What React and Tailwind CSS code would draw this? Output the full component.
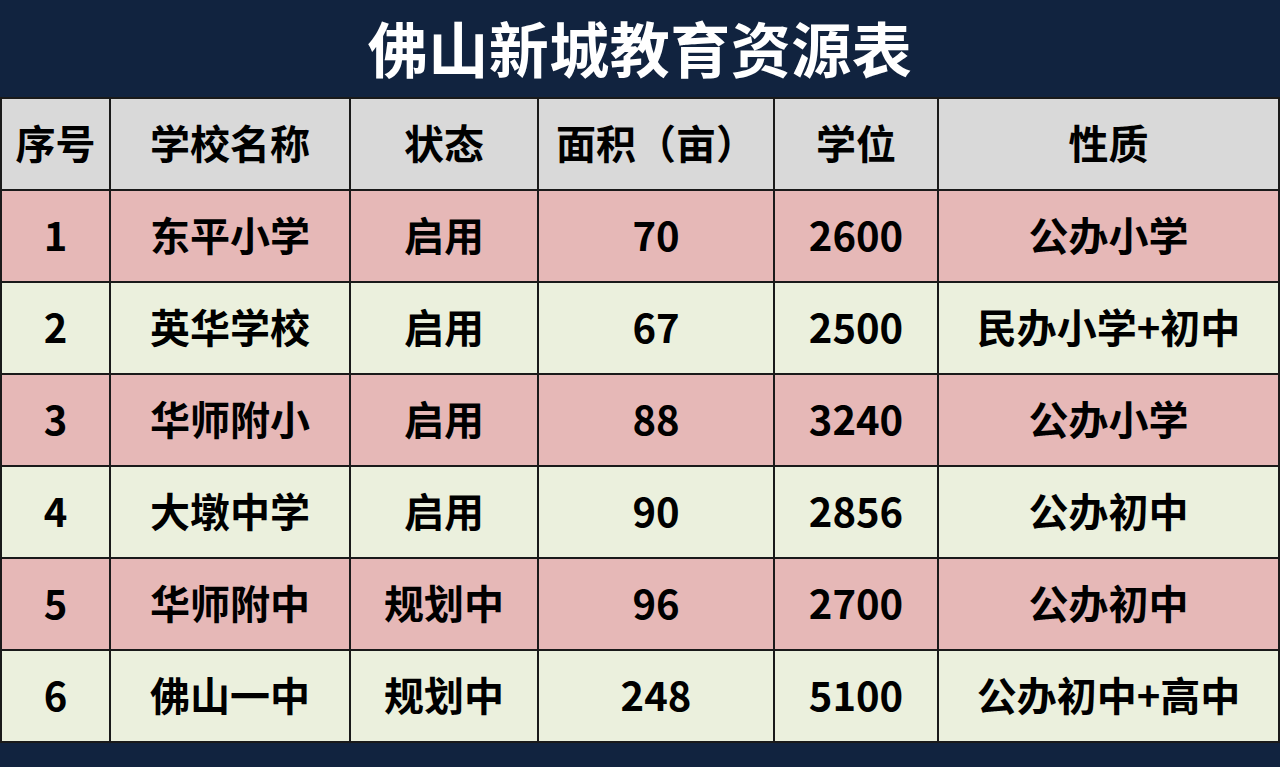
import React from 'react';

const COLS = 'grid grid-cols-[107px_240px_188px_236px_164px_1fr]';

const headers = ['序号', '学校名称', '状态', '面积（亩）', '学位', '性质'];

const rows = [
  ['1', '东平小学', '启用', '70', '2600', '公办小学'],
  ['2', '英华学校', '启用', '67', '2500', '民办小学+初中'],
  ['3', '华师附小', '启用', '88', '3240', '公办小学'],
  ['4', '大墩中学', '启用', '90', '2856', '公办初中'],
  ['5', '华师附中', '规划中', '96', '2700', '公办初中'],
  ['6', '佛山一中', '规划中', '248', '5100', '公办初中+高中'],
];

const Cell = ({ children, first }) => (
  <div
    className={`flex items-center justify-center h-[90px] pb-1 text-[40px] font-bold text-black ${first ? '' : 'border-l-2 border-[#1a1a1a]'}`}
  >
    {children}
  </div>
);

export default function App() {
  return (
    <div
      className="w-[1280px] h-[767px] bg-[#11233f] flex flex-col overflow-hidden"
      style={{ fontFamily: '"Noto Sans CJK SC", "Noto Sans", sans-serif' }}
    >
      {/* 标题 */}
      <div className="h-[97px] flex items-center justify-center">
        <h1 className="text-[60px] leading-none font-bold text-white tracking-[0.5px] -mt-1">佛山新城教育资源表</h1>
      </div>

      {/* 表格 */}
      <div className="border-2 border-[#1a1a1a]">
        <div className={`${COLS} bg-[#d9d9d9]`}>
          {headers.map((h, i) => (
            <Cell key={h} first={i === 0}>{h}</Cell>
          ))}
        </div>
        {rows.map((r, ri) => (
          <div
            key={r[0]}
            className={`${COLS} border-t-2 border-[#1a1a1a] ${ri % 2 === 0 ? 'bg-[#e6b8b7]' : 'bg-[#ebf0dd]'}`}
          >
            {r.map((c, i) => (
              <Cell key={i} first={i === 0}>{c}</Cell>
            ))}
          </div>
        ))}
      </div>
    </div>
  );
}
